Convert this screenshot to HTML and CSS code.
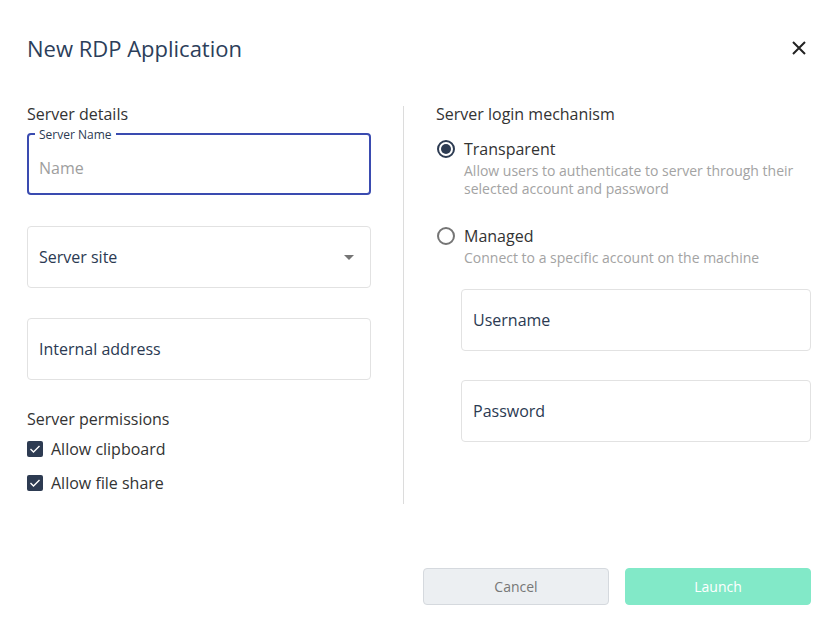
FILE: index.html
```html
<!DOCTYPE html>
<html>
<head>
<meta charset="utf-8">
<link rel="stylesheet" href="styles.css">
</head>
<body>
<div class="modal">
  <div class="header">
    <h1 class="title">New RDP Application</h1>
    <button class="close" aria-label="Close">
      <svg width="16" height="16" viewBox="0 0 16 16"><path d="M2 2 L14 14 M14 2 L2 14" stroke="#222" stroke-width="2" fill="none"/></svg>
    </button>
  </div>
  <div class="content">
    <div class="col left">
      <div class="section-title">Server details</div>
      <div class="field focused">
        <span class="float-label">Server Name</span>
        <span class="placeholder">Name</span>
      </div>
      <div class="field select">
        <span class="value">Server site</span>
        <svg class="caret" width="10" height="5" viewBox="0 0 10 5"><path d="M0 0 L10 0 L5 5 Z" fill="#757575"/></svg>
      </div>
      <div class="field addr">
        <span class="value">Internal address</span>
      </div>
      <div class="section-title perms">Server permissions</div>
      <label class="check">
        <span class="box"><svg width="12" height="10" viewBox="0 0 12 10"><path d="M1.5 5 L4.5 8 L10.5 2" stroke="#fff" stroke-width="1.4" fill="none"/></svg></span>
        <span>Allow clipboard</span>
      </label>
      <label class="check">
        <span class="box"><svg width="12" height="10" viewBox="0 0 12 10"><path d="M1.5 5 L4.5 8 L10.5 2" stroke="#fff" stroke-width="1.4" fill="none"/></svg></span>
        <span>Allow file share</span>
      </label>
    </div>
    <div class="divider"></div>
    <div class="col right">
      <div class="section-title">Server login mechanism</div>
      <div class="radio-opt">
        <span class="radio on"><span class="dot"></span></span>
        <div class="radio-text">
          <div class="radio-label">Transparent</div>
          <div class="radio-desc">Allow users to authenticate to server through their selected account and password</div>
        </div>
      </div>
      <div class="radio-opt managed">
        <span class="radio"></span>
        <div class="radio-text">
          <div class="radio-label">Managed</div>
          <div class="radio-desc">Connect to a specific account on the machine</div>
        </div>
      </div>
      <div class="sub-fields">
        <div class="field">
          <span class="value">Username</span>
        </div>
        <div class="field">
          <span class="value">Password</span>
        </div>
      </div>
    </div>
  </div>
  <div class="footer">
    <button class="btn cancel">Cancel</button>
    <button class="btn launch">Launch</button>
  </div>
</div>
</body>
</html>
```
FILE: styles.css
```css
* { box-sizing: border-box; }
html, body { margin: 0; padding: 0; background: #fff; }
body {
  font-family: "Open Sans", "Liberation Sans", sans-serif;
  color: #2b3a52;
  width: 837px;
  height: 624px;
  overflow: hidden;
}
.modal {
  padding: 0 26px 0 27px;
}
.header {
  display: flex;
  justify-content: space-between;
  align-items: center;
  height: 98px;
  padding-bottom: 2px;
}
.title {
  margin: 0;
  font-size: 22px;
  font-weight: 400;
  color: #2c3e5a;
  line-height: 30px;
}
.close {
  border: 0;
  background: none;
  padding: 0;
  width: 16px;
  height: 16px;
  margin-right: 4px;
  display: flex;
}
.content {
  display: flex;
  align-items: flex-start;
}
.col.left { width: 344px; display: flex; flex-direction: column; }
.divider {
  width: 1px;
  background: #dcdcdc;
  align-self: stretch;
  margin: 8px 32px 0 32px;
  height: 398px;
}
.col.right { flex: 1; display: flex; flex-direction: column; }
.section-title {
  font-size: 16px;
  line-height: 20px;
  color: #333;
  margin-top: 6px;
}
.field {
  position: relative;
  height: 62px;
  border: 1px solid #e2e2e2;
  border-radius: 4px;
  display: flex;
  align-items: center;
  padding: 0 11px;
  font-size: 16px;
  margin-top: 31px;
}
.field.addr { margin-top: 30px; }
.field .value { color: #2b3a52; }
.field.focused {
  border: 2px solid #3a4bb0;
  padding: 8px 10px 0 10px;
  margin-top: 9px;
}
.float-label {
  position: absolute;
  top: -6px;
  left: 6px;
  font-size: 12px;
  line-height: 12px;
  padding: 0 4px;
  background: #fff;
  color: #2b3a52;
}
.placeholder { color: #9e9e9e; }
.field.select { justify-content: space-between; padding-right: 16px; }
.caret { display: block; }
.section-title.perms { margin-top: 29px; }
.check {
  display: flex;
  align-items: center;
  gap: 8px;
  font-size: 16px;
  line-height: 22px;
  color: #333;
  margin-top: 9px;
}
.check + .check { margin-top: 12px; }
.box {
  width: 16px;
  height: 16px;
  border-radius: 2px;
  background: #2d3b52;
  display: flex;
  align-items: center;
  justify-content: center;
}
.radio-opt {
  display: flex;
  align-items: flex-start;
  gap: 9px;
  margin-top: 14px;
}
.radio-opt.managed { margin-top: 27px; }
.radio {
  width: 18px;
  height: 18px;
  border-radius: 50%;
  border: 2px solid #757575;
  margin-top: 2px;
  margin-left: 1px;
  display: flex;
  align-items: center;
  justify-content: center;
  flex: none;
}
.radio.on { border-color: #2d3b52; }
.dot { width: 10px; height: 10px; border-radius: 50%; background: #2d3b52; }
.radio-label { font-size: 16px; line-height: 22px; color: #333; }
.radio-desc { font-size: 14px; line-height: 18px; color: #a3a3a3; padding-top: 2px; }
.sub-fields { padding-left: 25px; }
.sub-fields .field:first-child { margin-top: 22px; }
.sub-fields .field + .field { margin-top: 29px; }
.footer {
  display: flex;
  justify-content: flex-end;
  gap: 16px;
  margin-top: 64px;
}
.btn {
  width: 186px;
  height: 37px;
  border-radius: 4px;
  font-family: "Open Sans", "Liberation Sans", sans-serif;
  font-size: 14px;
}
.cancel { background: #eceff2; border: 1px solid #d5d9de; color: #777; }
.launch { background: #82e9c8; border: 1px solid #82e9c8; color: #fff; }
```
